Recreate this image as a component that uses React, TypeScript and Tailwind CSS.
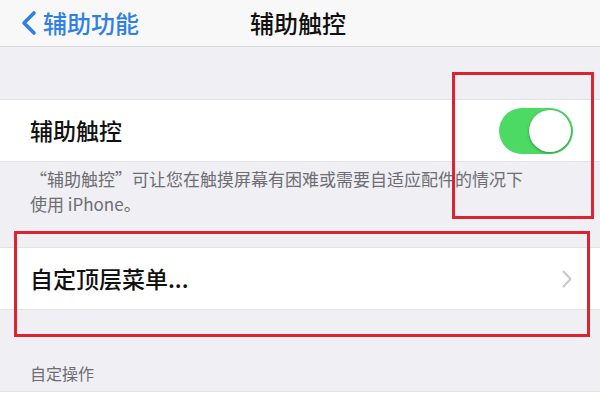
const App = () => {
  return (
    <div
      className="relative w-[600px] h-[400px] overflow-hidden bg-[#efeff4] text-[#111]"
      style={{ fontFamily: '"Noto Sans CJK SC", "Noto Sans", sans-serif' }}
    >
      {/* nav bar */}
      <div className="relative flex items-center h-[47px] bg-[#f8f8f8] border-b border-[#dcdce0]">
        <div className="flex items-center pl-[20px] text-[#2f80e6]">
          <svg width="18" height="26" viewBox="0 0 18 26" fill="none">
            <path d="M14 3 L4 13 L14 23" stroke="currentColor" strokeWidth="3.6" strokeLinecap="round" strokeLinejoin="round" />
          </svg>
          <span className="ml-[5px] text-[24px] font-medium leading-none">辅助功能</span>
        </div>
        <div className="absolute left-[250px] text-[24px] font-medium leading-none">辅助触控</div>
      </div>

      <div className="h-[52px]" />

      {/* toggle row */}
      <div className="flex items-center justify-between h-[63px] bg-white border-y border-[#e2e2e6] pl-[30px] pr-[27px]">
        <span className="text-[23px] font-medium">辅助触控</span>
        <div className="flex items-center justify-end w-[74px] h-[46px] rounded-full bg-[#4cd964] p-[2px]">
          <div className="w-[42px] h-[42px] rounded-full bg-white shadow-[0_1px_3px_rgba(0,0,0,0.35)]" />
        </div>
      </div>

      {/* footer text */}
      <div className="h-[85px] pl-[30px] pr-[30px] pt-[4px] text-[17px] leading-[25px] text-[#6d6d72]">
        <div>“辅助触控”可让您在触摸屏幕有困难或需要自适应配件的情况下</div>
        <div>使用 iPhone。</div>
      </div>

      {/* custom menu row */}
      <div className="flex items-center justify-between h-[63px] bg-white border-y border-[#e2e2e6] pl-[30px] pr-[28px]">
        <span className="text-[23px] font-medium">自定顶层菜单...</span>
        <svg width="10" height="18" viewBox="0 0 10 18" fill="none">
          <path d="M1.5 1.5 L8.5 9 L1.5 16.5" stroke="#c7c7cc" strokeWidth="2" strokeLinecap="round" strokeLinejoin="round" />
        </svg>
      </div>

      {/* section header */}
      <div className="flex items-end h-[82px] pl-[30px] pb-[6px] text-[16px] text-[#6d6d72] border-b border-[#e2e2e6]">
        自定操作
      </div>
      <div className="h-[20px] bg-white" />

      {/* red annotation boxes */}
      <div className="absolute left-[452px] top-[72px] w-[142px] h-[147px] border-[3px] border-[#dc2331]" />
      <div className="absolute left-[14px] top-[231px] w-[576px] h-[106px] border-[3px] border-[#dc2331]" />
    </div>
  );
};

export default App;
